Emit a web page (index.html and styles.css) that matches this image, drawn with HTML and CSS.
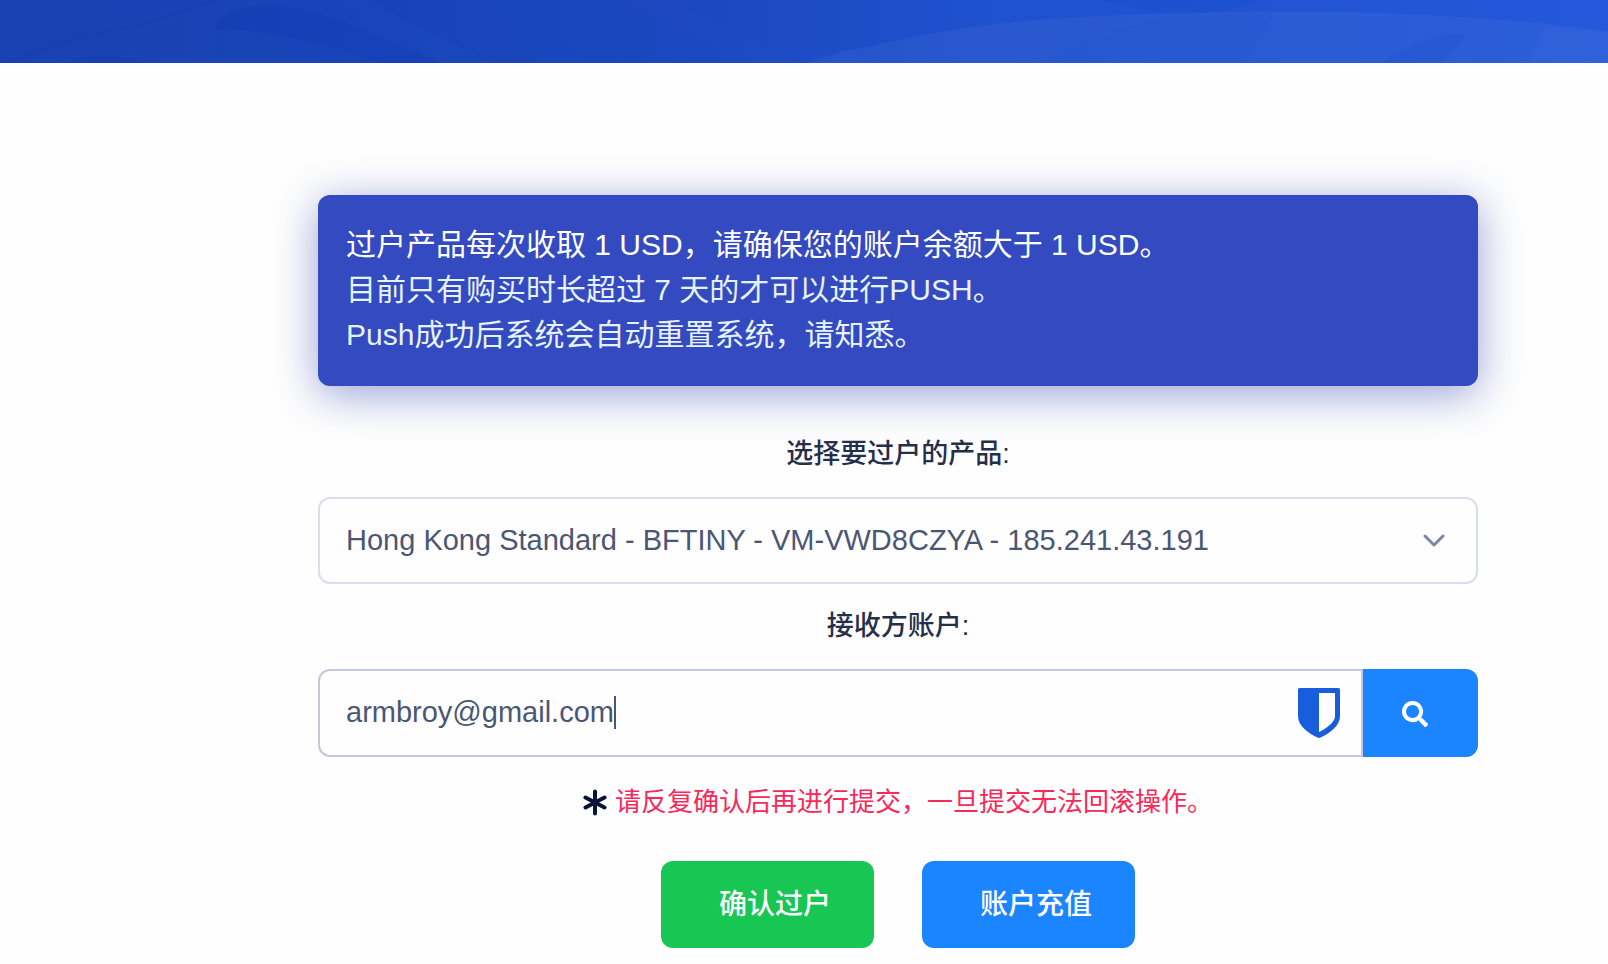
FILE: index.html
```html
<!DOCTYPE html>
<html lang="zh-CN">
<head>
<meta charset="utf-8">
<meta name="viewport" content="width=device-width, initial-scale=1">
<title>过户产品</title>
<link rel="stylesheet" href="styles.css">
</head>
<body>
<header class="hero">
  <svg class="hero-art" viewBox="0 0 1608 63" preserveAspectRatio="none" aria-hidden="true">
    <defs>
      <linearGradient id="leaf" x1="0" y1="0" x2="1" y2="1">
        <stop offset="0" stop-color="#0c35b0" stop-opacity="0"/>
        <stop offset="1" stop-color="#0c35b0" stop-opacity=".3"/>
      </linearGradient>
      <linearGradient id="fold" x1="0" y1="0" x2="1" y2="0">
        <stop offset="0" stop-color="#1236ac" stop-opacity=".5"/>
        <stop offset="1" stop-color="#1236ac" stop-opacity="0"/>
      </linearGradient>
    </defs>
    <path d="M10 63Q160 -2 235 0Q200 40 215 63Z" fill="#2a50c0" opacity=".08"/>
    <path d="M10 63Q80 34 140 25L235 -6" fill="none" stroke="#1238a4" stroke-width="3" opacity=".15"/>
    <path d="M60 0Q95 34 140 63" fill="none" stroke="#1238a4" stroke-width="2" opacity=".1"/>
    <path d="M215 25Q225 8 265 5C330 8 375 38 440 63H380Q300 32 215 28Z" fill="#0f38b4" opacity=".3"/>
    <path d="M70 63Q105 48 140 63Z" fill="#0f38b4" opacity=".2"/>
    <path d="M368 0Q420 30 495 63H440Q400 34 330 0Z" fill="#2c50c8" opacity=".12"/>
    <path d="M368 0Q420 30 495 63H600L480 0Z" fill="url(#fold)" opacity=".25"/>
    <path d="M620 0L750 63H804L670 0Z" fill="#2c50cc" opacity=".13"/>
    <path d="M1100 0H1260Q1240 12 1170 15Z" fill="#0d40bc" opacity=".1"/>
    <path d="M808 63C826 56 846 49 863 48C930 32 1010 19 1100 16C1300 6 1475 13 1608 31V63Z" fill="#fff" opacity=".045"/>
    <path d="M1040 63Q1130 20 1180 16L1275 13L1245 63Z" fill="#1b48c8" opacity=".08"/>
    <path d="M1380 63Q1440 28 1464 35Q1466 42 1438 63Z" fill="#1645c4" opacity=".15"/>
    <path d="M1545 27L1608 32V63H1530Z" fill="#fff" opacity=".015"/>
  </svg>
</header>

<main class="content">
  <section class="alert">
    <p class="alert-lead">过户产品每次收取 1 USD，请确保您的账户余额大于 1 USD。</p>
    <p>目前只有购买时长超过 7 天的才可以进行PUSH。</p>
    <p>Push成功后系统会自动重置系统，请知悉。</p>
  </section>

  <form class="form">
    <label class="label" for="product">选择要过户的产品:</label>
    <div class="select-wrap">
      <select class="control" id="product">
        <option>Hong Kong Standard - BFTINY - VM-VWD8CZYA - 185.241.43.191</option>
      </select>
      <svg class="chevron" viewBox="0 0 22 14" aria-hidden="true"><path d="M2 2L11 11L20 2"/></svg>
    </div>

    <label class="label" for="account">接收方账户:</label>
    <div class="group">
      <div class="input-wrap">
        <input class="control control-joined" id="account" type="text" value="armbroy@gmail.com">
        <span class="caret"></span>
        <svg class="shield" viewBox="0 0 42 50" aria-hidden="true"><path fill-rule="evenodd" d="M1.500 0H40.500Q42 0 42 1.500V28C42 38 32 45 22.500 49.500Q21 50.300 19.500 49.500C10 45 0 38 0 28V1.500Q0 0 1.500 0ZM21 5V44C29 40 37 34 37 28V5Z"/></svg>
      </div>
      <button class="search" type="button" aria-label="搜索">
        <svg class="search-icon" viewBox="0 0 512 512" aria-hidden="true"><path d="M505 442.700L405.300 343c-4.500-4.500-10.600-7-17-7H372c27.600-35.300 44-79.700 44-128C416 93.100 322.900 0 208 0S0 93.100 0 208s93.100 208 208 208c48.300 0 92.700-16.400 128-44v16.300c0 6.400 2.500 12.500 7 17l99.700 99.700c9.400 9.400 24.600 9.400 33.900 0l28.300-28.300c9.400-9.400 9.400-24.600.1-34zM208 336c-70.700 0-128-57.200-128-128 0-70.700 57.200-128 128-128 70.700 0 128 57.200 128 128 0 70.700-57.200 128-128 128z"/></svg>
      </button>
    </div>

    <p class="warning">
      <svg class="asterisk" viewBox="0 0 24 27" aria-hidden="true"><path d="M12 2.500V24.500M2.500 8.500L21.500 18.500M21.500 8.500L2.500 18.500"/></svg>
      <span>请反复确认后再进行提交，一旦提交无法回滚操作。</span>
    </p>

    <div class="actions">
      <button class="btn btn-success" type="button">确认过户</button>
      <button class="btn btn-primary" type="button">账户充值</button>
    </div>
  </form>
</main>
</body>
</html>
```

FILE: styles.css
```css
* {
  box-sizing: border-box;
}

body {
  margin: 0;
  background: #fefefe;
  color: #252f4a;
  font-family: "Liberation Sans", "Noto Sans CJK SC", sans-serif;
  font-size: 29px;
}

p {
  margin: 0;
}

.hero {
  height: 63px;
  background: linear-gradient(90deg, #1841b3 0%, #1a47be 40%, #1f50cd 60%, #2457da 100%);
}

.hero-art {
  display: block;
  width: 100%;
  height: 100%;
}

.content {
  padding: 132px 130px 16px 318px;
}

.alert {
  padding: 27px 28px 29px;
  border-radius: 12px;
  background: #334ac0;
  box-shadow: 0 8px 44px rgba(40, 60, 170, 0.48);
  color: #e6f2ff;
  font-size: 30px;
  line-height: 45px;
}

.alert-lead {
  color: #fff;
}

.form {
  display: flex;
  flex-direction: column;
  padding-top: 48px;
}

.label {
  margin-bottom: 23px;
  font-size: 27px;
  font-weight: 500;
  line-height: 40px;
  text-align: center;
}

.select-wrap {
  position: relative;
  margin-bottom: 22px;
}

.control {
  display: block;
  width: 100%;
  height: 87px;
  margin: 0;
  padding: 0 26px 2px;
  border: 2px solid #d9deea;
  border-radius: 12px;
  outline: 0;
  appearance: none;
  background: #fefefe;
  color: #4b5675;
  font: inherit;
}

.chevron {
  position: absolute;
  top: 37px;
  right: 33px;
  width: 22px;
  height: 14px;
  fill: none;
  stroke: #7c86a2;
  stroke-width: 3;
  stroke-linecap: round;
  stroke-linejoin: round;
  pointer-events: none;
}

.group {
  display: flex;
  height: 88px;
}

.input-wrap {
  position: relative;
  flex: 1;
}

.control-joined {
  height: 100%;
  border-color: #c3c8dd;
  border-radius: 12px 0 0 12px;
}

.caret {
  position: absolute;
  top: 27px;
  left: 296px;
  width: 2px;
  height: 33px;
  background: #4b5675;
}

.shield {
  position: absolute;
  top: 19px;
  right: 23px;
  width: 42px;
  height: 50px;
  fill: #175ddc;
}

.search {
  width: 115px;
  padding: 2px 0 0 39px;
  border: 0;
  border-radius: 0 12px 12px 0;
  background: #1b84ff;
  text-align: left;
}

.search-icon {
  display: block;
  width: 26px;
  height: 26px;
  fill: #fff;
}

.warning {
  display: flex;
  align-items: center;
  justify-content: center;
  gap: 8px;
  margin: 26px 0 39px;
  color: #f8285a;
  font-size: 26px;
  line-height: 39px;
}

.asterisk {
  width: 24px;
  height: 27px;
  fill: none;
  stroke: #071437;
  stroke-width: 4;
  stroke-linecap: round;
}

.actions {
  display: flex;
  justify-content: center;
  gap: 48px;
}

.btn {
  height: 87px;
  padding: 0 43px 6px 58px;
  border: 0;
  border-radius: 12px;
  color: #fff;
  font-family: inherit;
  font-size: 28px;
  font-weight: 500;
}

.btn-success {
  background: #17c653;
}

.btn-primary {
  background: #1b84ff;
}
```
